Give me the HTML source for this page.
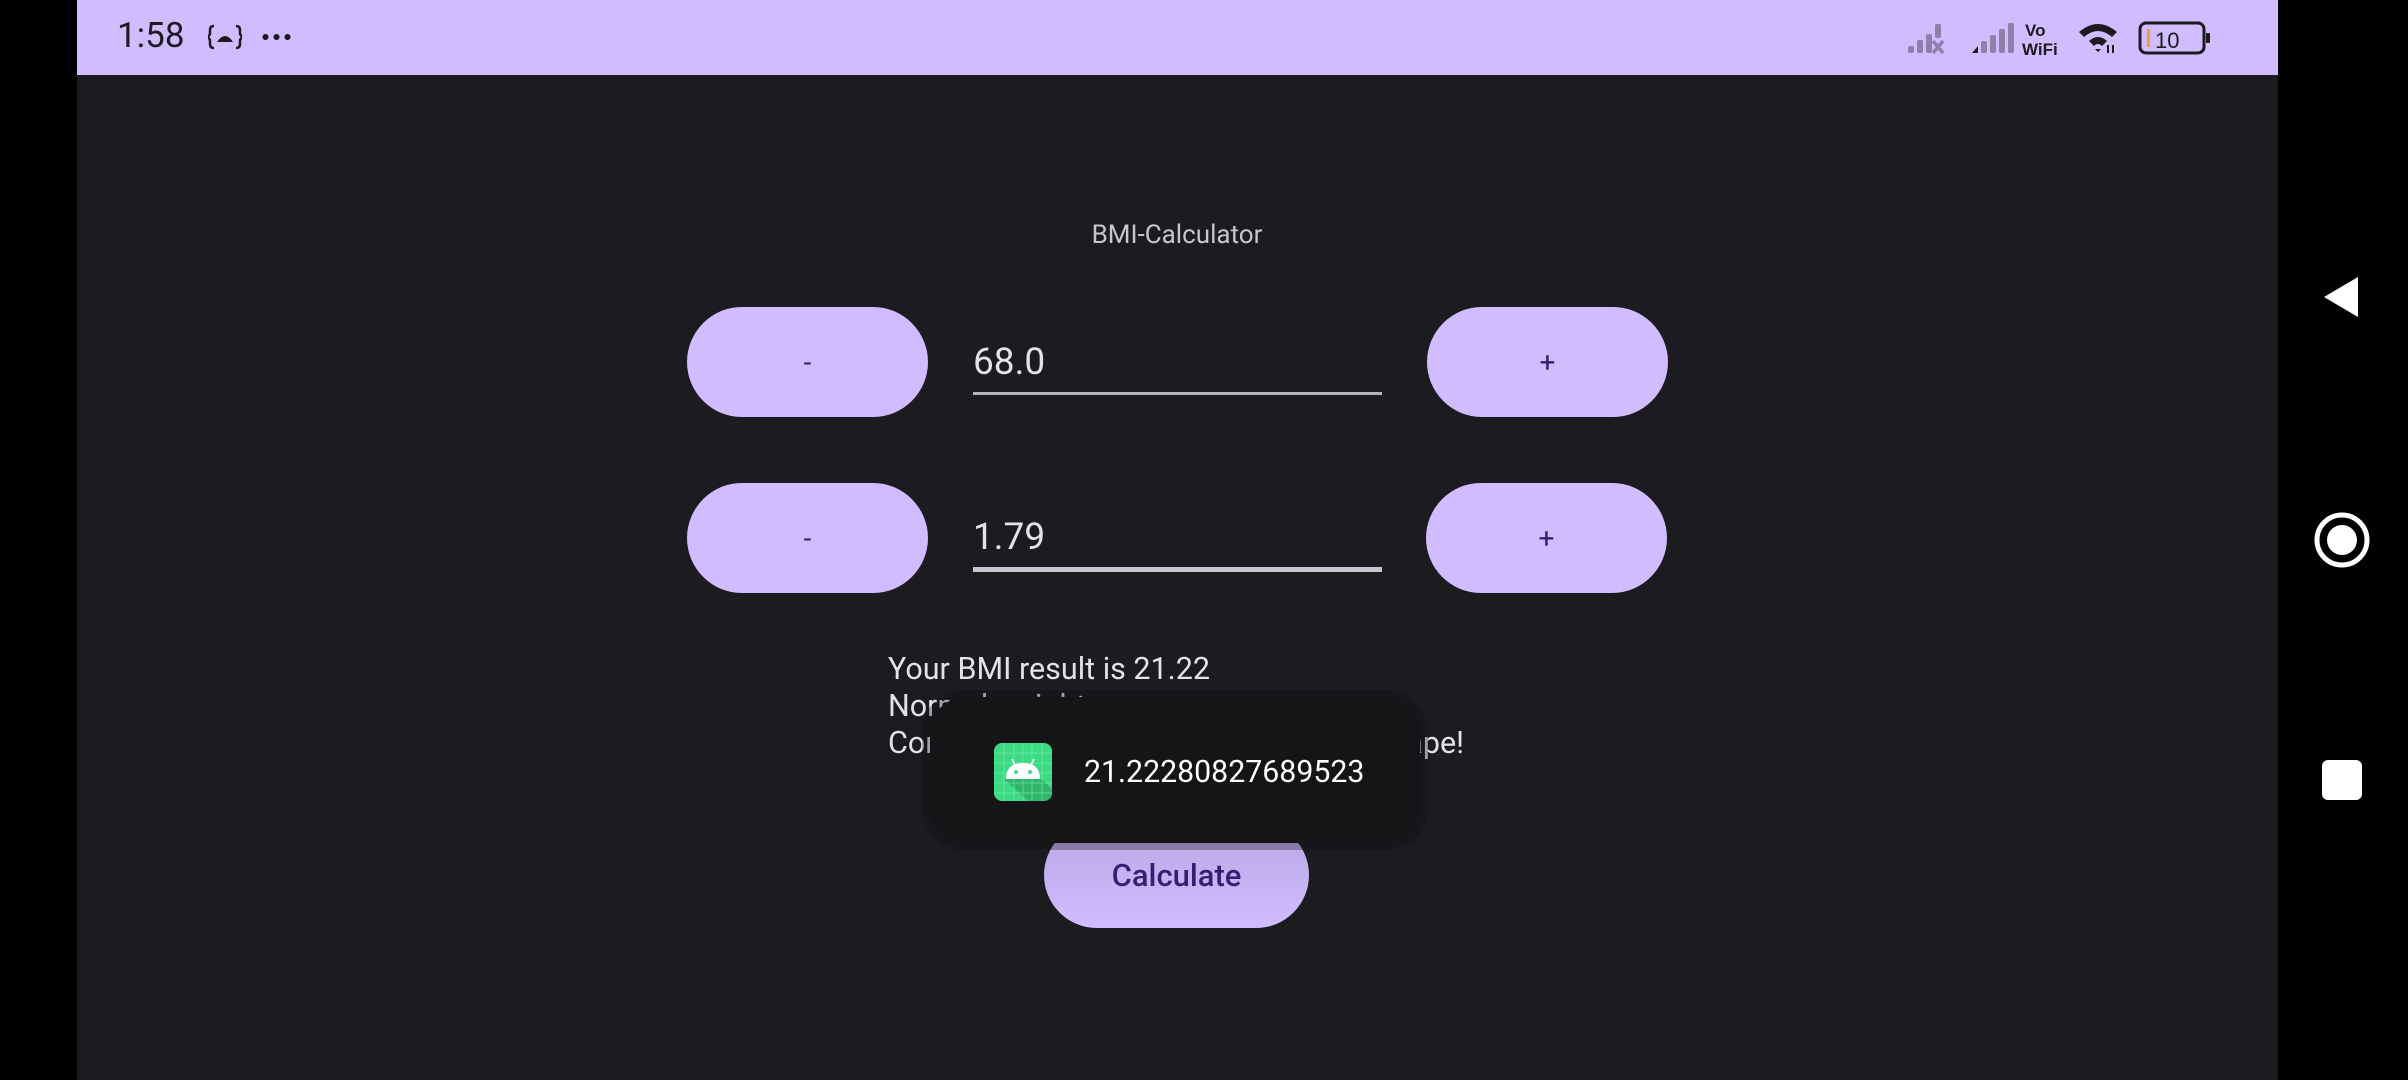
<!DOCTYPE html>
<html><head><meta charset="utf-8"><style>
*{margin:0;padding:0;box-sizing:border-box}
body{width:2408px;height:1080px;background:#000;position:relative;overflow:hidden;font-family:"Roboto","Liberation Sans",sans-serif}
.app{position:absolute;left:77px;top:0;width:2201px;height:1080px;background:#1c1b1f}
.sb{position:absolute;left:77px;top:0;width:2201px;height:75px;background:#d0bcff}
.a{position:absolute}
.btn{position:absolute;background:#d0bcff;border-radius:56px;color:#381e72;font-size:28px;display:flex;align-items:center;justify-content:center}
.val{position:absolute;color:#e6e0e9;font-size:37px;left:973px}
.res{position:absolute;left:888px;color:#e6e0e9;font-size:30.5px;line-height:37px;white-space:nowrap}
</style></head><body>
<div class="app"></div>
<div class="sb"></div>
<div class="a" style="left:117px;top:15px;font-size:35px;color:#1d1b20">1:58</div>
<svg class="a" style="left:208px;top:24px" width="34" height="26" viewBox="0 0 34 26"><path d="M6 2 Q2 2 2 6 V10 L0 13 L2 16 V20 Q2 24 6 24 M28 2 Q32 2 32 6 V10 L34 13 L32 16 V20 Q32 24 28 24" fill="none" stroke="#1d1b20" stroke-width="2.5"/><path d="M9 18 Q17 6 25 18 Z" fill="#1d1b20"/></svg>
<div class="a" style="left:260px;top:34px;width:32px;height:6px;background:radial-gradient(circle,#1d1b20 2.8px,transparent 3.2px) 0 0/11px 6px"></div>
<svg class="a" style="left:1905px;top:20px" width="310" height="36" viewBox="0 0 310 36">
<g fill="#8e80a8"><rect x="3" y="26" width="6" height="7" rx="2"/><rect x="12" y="20" width="6" height="13" rx="2"/><rect x="21" y="14" width="6" height="19" rx="2"/><rect x="30" y="4" width="6" height="14" rx="2"/></g>
<path d="M28 21 L38 33 M38 21 L28 33" stroke="#8e80a8" stroke-width="3.5"/>
<path d="M67 33 L73 26 V33 Z" fill="#1d1b20"/>
<g fill="#8e80a8"><rect x="76" y="21" width="6" height="12" rx="2"/><rect x="85" y="15" width="6" height="18" rx="2"/><rect x="94" y="9" width="6" height="24" rx="2"/><rect x="103" y="3" width="6" height="30" rx="2"/></g>
<text x="120" y="16" font-size="17" font-weight="bold" fill="#1d1b20" font-family="Liberation Sans">Vo</text>
<text x="117" y="35" font-size="17" font-weight="bold" fill="#1d1b20" font-family="Liberation Sans">WiFi</text>
<path d="M174 12 Q193 -4 212 12 L207 17 Q193 5 179 17 Z M184 21 Q193 13 202 21 L197 26 Q193 22 189 26 Z M190 29 L193 32 L196 29 Z" fill="#1d1b20"/>
<path d="M203 25 L203 33 M208 25 L208 33" stroke="#1d1b20" stroke-width="2"/>
<rect x="235" y="3" width="64" height="30" rx="6" fill="none" stroke="#1d1b20" stroke-width="3"/>
<rect x="242" y="9" width="3" height="18" fill="#f0a030"/>
<rect x="301" y="13" width="4" height="10" rx="1" fill="#1d1b20"/>
<text x="250" y="28" font-size="22" fill="#1d1b20" font-family="Liberation Sans">10</text>
</svg>
<div class="a" style="top:220px;text-align:center;color:#cac4d0;font-size:26px;left:0;width:2354px">BMI-Calculator</div>
<div class="btn" style="left:687px;top:307px;width:241px;height:110px">-</div>
<div class="val" style="top:341px">68.0</div>
<div class="a" style="left:973px;top:392px;width:409px;height:3px;background:#b8b2bd"></div>
<div class="btn" style="left:1427px;top:307px;width:241px;height:110px">+</div>
<div class="btn" style="left:687px;top:483px;width:241px;height:110px">-</div>
<div class="val" style="top:516px">1.79</div>
<div class="a" style="left:973px;top:567px;width:409px;height:5px;background:#cac4d0"></div>
<div class="btn" style="left:1426px;top:483px;width:241px;height:110px">+</div>
<div class="res" style="top:651px">Your BMI result is 21.22</div>
<div class="res" style="top:688px">Normal weight</div>
<div class="res" style="top:725px;width:576px;display:flex;justify-content:space-between"><span>Congratulations, you</span><span>are in good shape!</span></div>
<div class="btn" style="left:1044px;top:822px;width:265px;height:106px;font-size:31px;font-weight:500;background:linear-gradient(#b9a7e3,#d0bcff)">Calculate</div>
<div class="a" style="left:922px;top:690px;width:506px;height:160px;border-radius:42px;background:rgba(14,13,16,0.3)"></div>
<div class="a" style="left:930px;top:697px;width:490px;height:146px;border-radius:36px;background:#151417"></div>
<svg class="a" style="left:994px;top:743px" width="58" height="58" viewBox="0 0 58 58">
<defs><clipPath id="c"><rect width="58" height="58" rx="8"/></clipPath></defs>
<g clip-path="url(#c)"><rect width="58" height="58" fill="#3ddc84"/>
<path d="M10 36 L48 36 L58 46 V58 H34 Z" fill="#2fb56c"/>
<g stroke="#7fe8b0" stroke-width="1" opacity=".6"><path d="M0 10H58M0 20H58M0 30H58M0 40H58M0 50H58M10 0V58M20 0V58M29 0V58M38 0V58M48 0V58"/></g>
<path d="M12 36 Q12 20 29 20 Q46 20 46 36 Z" fill="#fff"/>
<path d="M18 16 L21 22 M40 16 L37 22" stroke="#fff" stroke-width="1.6"/>
<circle cx="22" cy="29" r="2" fill="#3ddc84"/><circle cx="36" cy="29" r="2" fill="#3ddc84"/></g>
</svg>
<div class="a" style="left:1084px;top:755px;color:#fff;font-size:30.3px">21.22280827689523</div>
<svg class="a" style="left:2320px;top:275px" width="44" height="44" viewBox="0 0 44 44"><path d="M38 2 V42 L4 22 Z" fill="#fff"/></svg>
<svg class="a" style="left:2313px;top:511px" width="58" height="58" viewBox="0 0 58 58"><circle cx="29" cy="29" r="25" fill="none" stroke="#fff" stroke-width="5"/><circle cx="29" cy="29" r="15" fill="#fff"/></svg>
<div class="a" style="left:2322px;top:760px;width:40px;height:40px;border-radius:6px;background:#fff"></div>
</body></html>
